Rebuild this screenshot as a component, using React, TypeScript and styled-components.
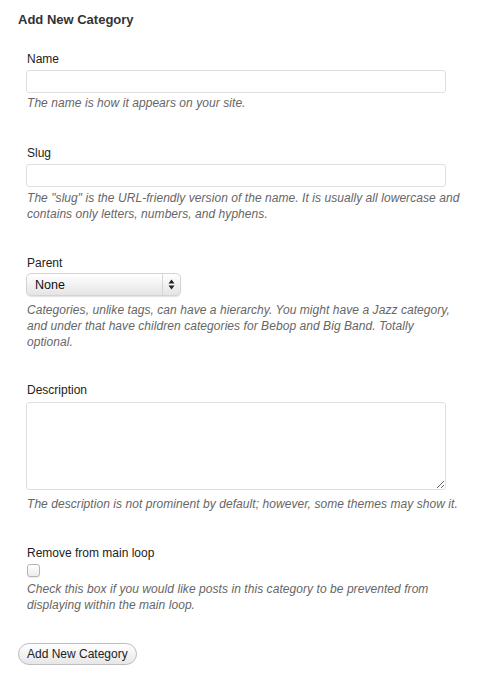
import React from "react";
import styled, { createGlobalStyle } from "styled-components";

const Global = createGlobalStyle`
  html, body { margin: 0; padding: 0; background: #fff; }
  body { font-family: "Liberation Sans", Arial, Helvetica, sans-serif; color: #333; }
`;

const Page = styled.div`
  width: 480px;
  height: 680px;
  display: flex;
  flex-direction: column;
  box-sizing: border-box;
  padding: 12px 0 0 0;
`;

const Heading = styled.h3`
  margin: 0 0 0 18px;
  font-size: 13px;
  line-height: 16px;
  font-weight: bold;
  color: #333;
`;

const Field = styled.div<{ $top: number }>`
  display: flex;
  flex-direction: column;
  align-items: flex-start;
  margin: ${(p) => p.$top}px 0 0 26px;
  width: 436px;
`;

const Label = styled.label`
  font-size: 12px;
  line-height: 16px;
  color: #222;
  margin: 0 0 0 1px;
`;

const TextInput = styled.input`
  box-sizing: border-box;
  width: 420px;
  height: 23px;
  margin-top: 3px;
  border: 1px solid #dfdfdf;
  border-radius: 3px;
  background: #fff;
  outline: none;
  padding: 2px 4px;
  font: 12px "Liberation Sans", Arial, sans-serif;
`;

const Help = styled.p<{ $top?: number }>`
  margin: ${(p) => p.$top ?? 2}px 0 0 1px;
  width: 435px;
  font-size: 12px;
  line-height: 16px;
  letter-spacing: 0.06px;
  font-style: italic;
  color: #666;
`;

const SelectBox = styled.div`
  box-sizing: border-box;
  margin-top: 2px;
  width: 155px;
  height: 23px;
  display: flex;
  align-items: stretch;
  border: 1px solid #d4d4d4;
  border-radius: 5px;
  background: linear-gradient(#ffffff, #f4f4f4 45%, #e4e4e4);
  box-shadow: 0 1px 1px rgba(0, 0, 0, 0.12);
  font-size: 12px;
  color: #111;
`;

const SelectText = styled.span`
  flex: 1;
  display: flex;
  align-items: center;
  padding-left: 8px;
  font-size: 12.5px;
`;

const SelectArrow = styled.span`
  width: 17px;
  display: flex;
  align-items: center;
  justify-content: center;
  border-left: 1px solid #d6d6d6;
`;

const TextArea = styled.textarea`
  box-sizing: border-box;
  width: 420px;
  height: 88px;
  margin: 4px 0 0 0;
  display: block;
  border: 1px solid #dfdfdf;
  border-radius: 3px;
  background: #fff;
  outline: none;
  resize: both;
  font: 12px "Liberation Sans", Arial, sans-serif;
`;

const CheckBox = styled.span`
  box-sizing: border-box;
  display: block;
  width: 13px;
  height: 13px;
  margin: 3px 0 0 1px;
  border: 1px solid #b4b4b4;
  border-radius: 3px;
  background: linear-gradient(#ffffff, #ececec);
  box-shadow: 0 1px 1px rgba(0, 0, 0, 0.08);
`;

const Button = styled.button`
  align-self: flex-start;
  box-sizing: border-box;
  margin: 30px 0 0 18px;
  height: 22px;
  padding: 0 8px;
  border: 1px solid #bdbdbd;
  border-radius: 11px;
  background: linear-gradient(#ffffff, #f1f1f1 60%, #e6e6e6);
  font: 12px "Liberation Sans", Arial, sans-serif;
  color: #222;
  line-height: 20px;
`;

export default function App() {
  return (
    <>
      <Global />
      <Page>
        <Heading>Add New Category</Heading>
        <Field $top={23}>
          <Label>Name</Label>
          <TextInput type="text" />
          <Help>The name is how it appears on your site.</Help>
        </Field>
        <Field $top={34}>
          <Label>Slug</Label>
          <TextInput type="text" />
          <Help $top={3}>
            The "slug" is the URL-friendly version of the name. It is usually all lowercase and
            contains only letters, numbers, and hyphens.
          </Help>
        </Field>
        <Field $top={33}>
          <Label>Parent</Label>
          <SelectBox>
            <SelectText>None</SelectText>
            <SelectArrow>
              <svg width="7" height="11" viewBox="0 0 7 11">
                <path d="M0.5 4.5 L3.5 0.5 L6.5 4.5 Z" fill="#222" />
                <path d="M0.5 6.5 L3.5 10.5 L6.5 6.5 Z" fill="#222" />
              </svg>
            </SelectArrow>
          </SelectBox>
          <Help $top={6}>
            Categories, unlike tags, can have a hierarchy. You might have a Jazz category, and
            under that have children categories for Bebop and Big Band. Totally optional.
          </Help>
        </Field>
        <Field $top={32}>
          <Label>Description</Label>
          <TextArea />
          <Help $top={6}>
            The description is not prominent by default; however, some themes may show it.
          </Help>
        </Field>
        <Field $top={33}>
          <Label>Remove from main loop</Label>
          <CheckBox />
          <Help $top={4}>
            Check this box if you would like posts in this category to be prevented from
            displaying within the main loop.
          </Help>
        </Field>
        <Button>Add New Category</Button>
      </Page>
    </>
  );
}
